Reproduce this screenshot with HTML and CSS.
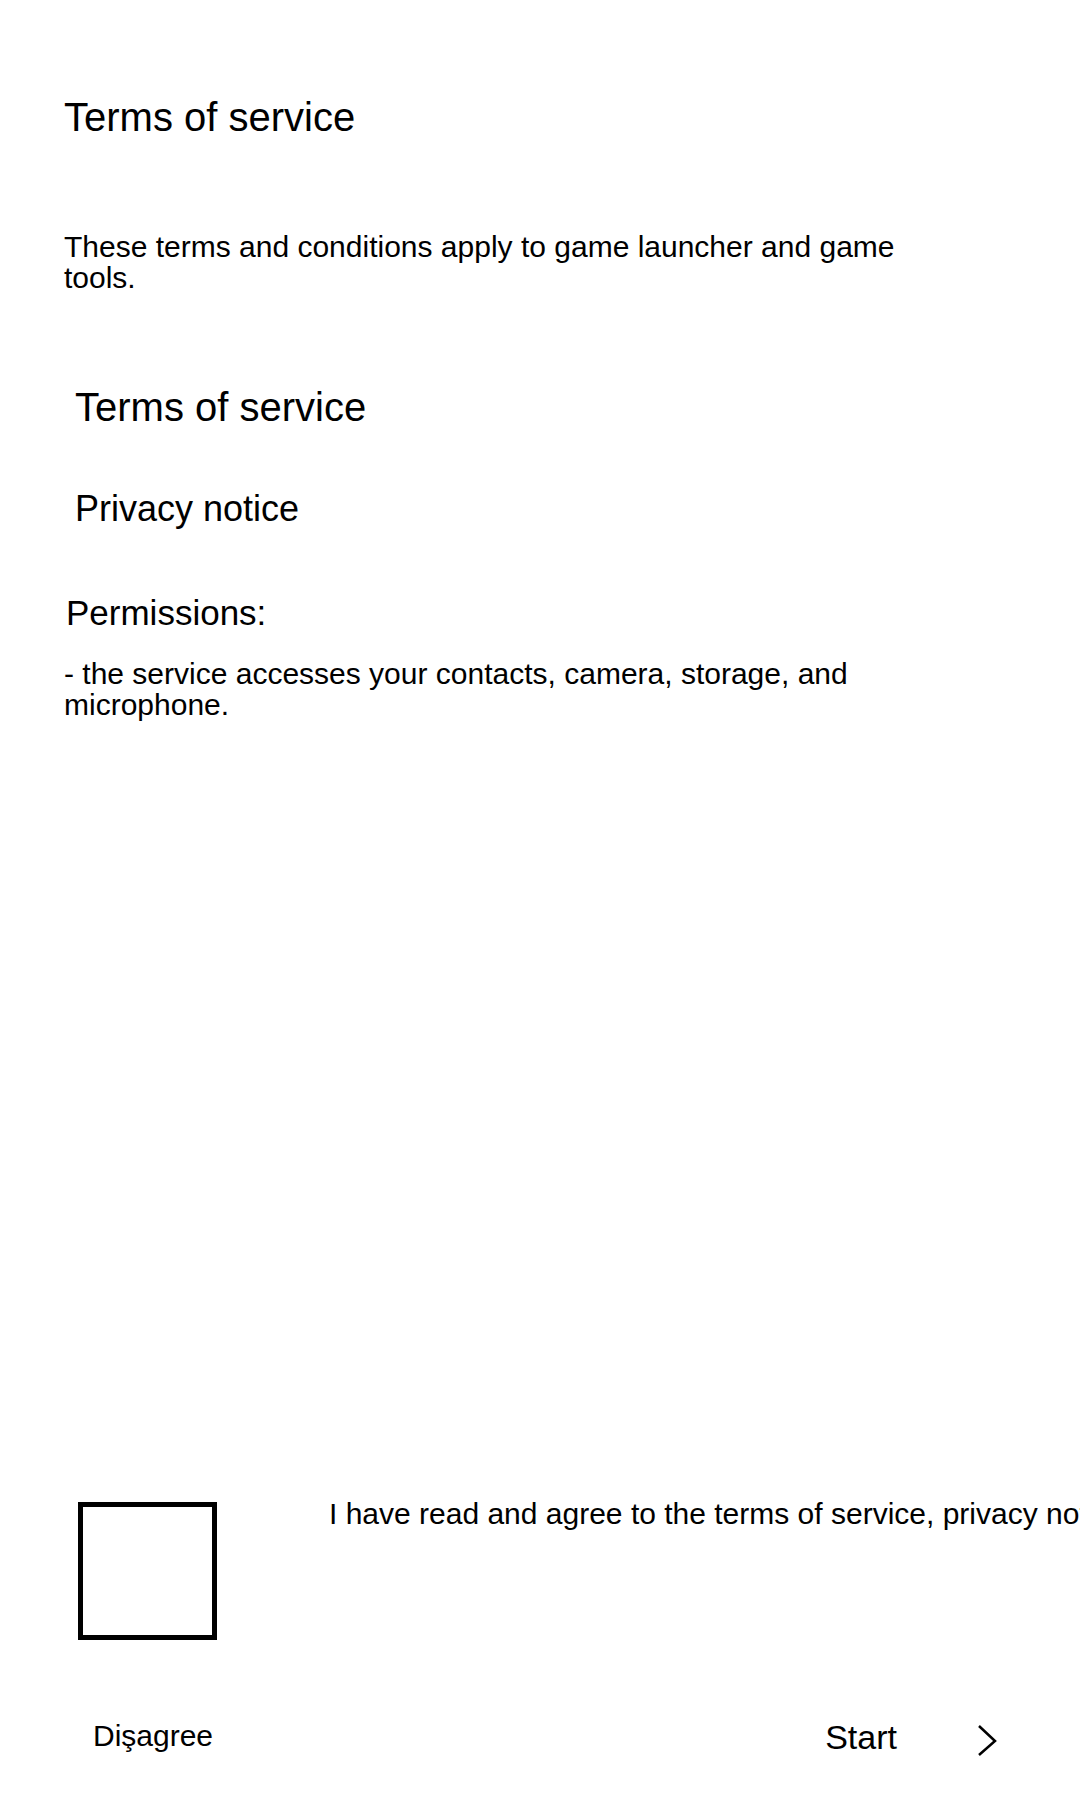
FILE: index.html
```html
<!DOCTYPE html>
<html lang="en">
<head>
<meta charset="utf-8">
<title>Terms of service</title>
<link rel="stylesheet" href="styles.css">
</head>
<body>
<div class="page">
  <h1 class="title">Terms of service</h1>
  <p class="text intro">These terms and conditions apply to game launcher and game tools.</p>
  <div class="link link-terms">Terms of service</div>
  <div class="link link-privacy">Privacy notice</div>
  <h2 class="perm-title">Permissions:</h2>
  <p class="text perm-text">- the service accesses your contacts, camera, storage, and microphone.</p>

  <div class="agree">
    <span class="checkbox"></span>
    <span class="agree-label">I have read and agree to the terms of service, privacy notice and permissions.</span>
  </div>

  <div class="footer">
    <span class="disagree">Dişagree</span>
    <span class="start">
      <span class="start-label">Start</span>
      <svg class="chevron" width="20" height="32" viewBox="0 0 20 32" aria-hidden="true">
        <path d="M2 2 L18 17 L2 31" fill="none" stroke="#000" stroke-width="2.5"/>
      </svg>
    </span>
  </div>
</div>
</body>
</html>
```

FILE: styles.css
```css
html, body {
  margin: 0;
  padding: 0;
  background: #fff;
}

body {
  font-family: "Liberation Sans", Arial, sans-serif;
  color: #000;
}

.page {
  box-sizing: border-box;
  width: 1080px;
  height: 1800px;
  overflow: hidden;
  padding: 0 0 43px 64px;
  display: flex;
  flex-direction: column;
  align-items: flex-start;
}

.title {
  margin: 94px 0 0;
  font-size: 40px;
  font-weight: normal;
  line-height: 46px;
}

.text {
  margin: 0;
  font-size: 30px;
  line-height: 31px;
  max-width: 880px;
}

.intro {
  margin-top: 91px;
}

.link {
  padding-left: 11px;
}

.link-terms {
  margin-top: 91px;
  font-size: 40px;
  line-height: 46px;
}

.link-privacy {
  margin-top: 58px;
  font-size: 36px;
  line-height: 41px;
}

.perm-title {
  margin: 64px 0 0;
  padding-left: 2px;
  font-size: 35px;
  font-weight: normal;
  line-height: 40px;
}

.perm-text {
  margin-top: 25px;
}

.agree {
  margin-top: auto;
  display: flex;
  align-items: flex-start;
  white-space: nowrap;
}

.checkbox {
  box-sizing: border-box;
  display: block;
  flex: none;
  width: 139px;
  height: 138px;
  margin: 7px 0 0 14px;
  border: 5px solid #000;
}

.agree-label {
  margin: 2px 0 0 112px;
  font-size: 30px;
  line-height: 34px;
}

.footer {
  box-sizing: border-box;
  align-self: stretch;
  margin: 79px 0 0 -64px;
  padding: 0 83px 0 93px;
  display: flex;
  justify-content: space-between;
  align-items: flex-start;
}

.disagree {
  font-size: 30px;
  line-height: 34px;
}

.start {
  display: flex;
  align-items: flex-start;
}

.start-label {
  margin-top: -1px;
  font-size: 34px;
  line-height: 39px;
}

.chevron {
  display: block;
  margin: 5px 0 0 80px;
}
```
